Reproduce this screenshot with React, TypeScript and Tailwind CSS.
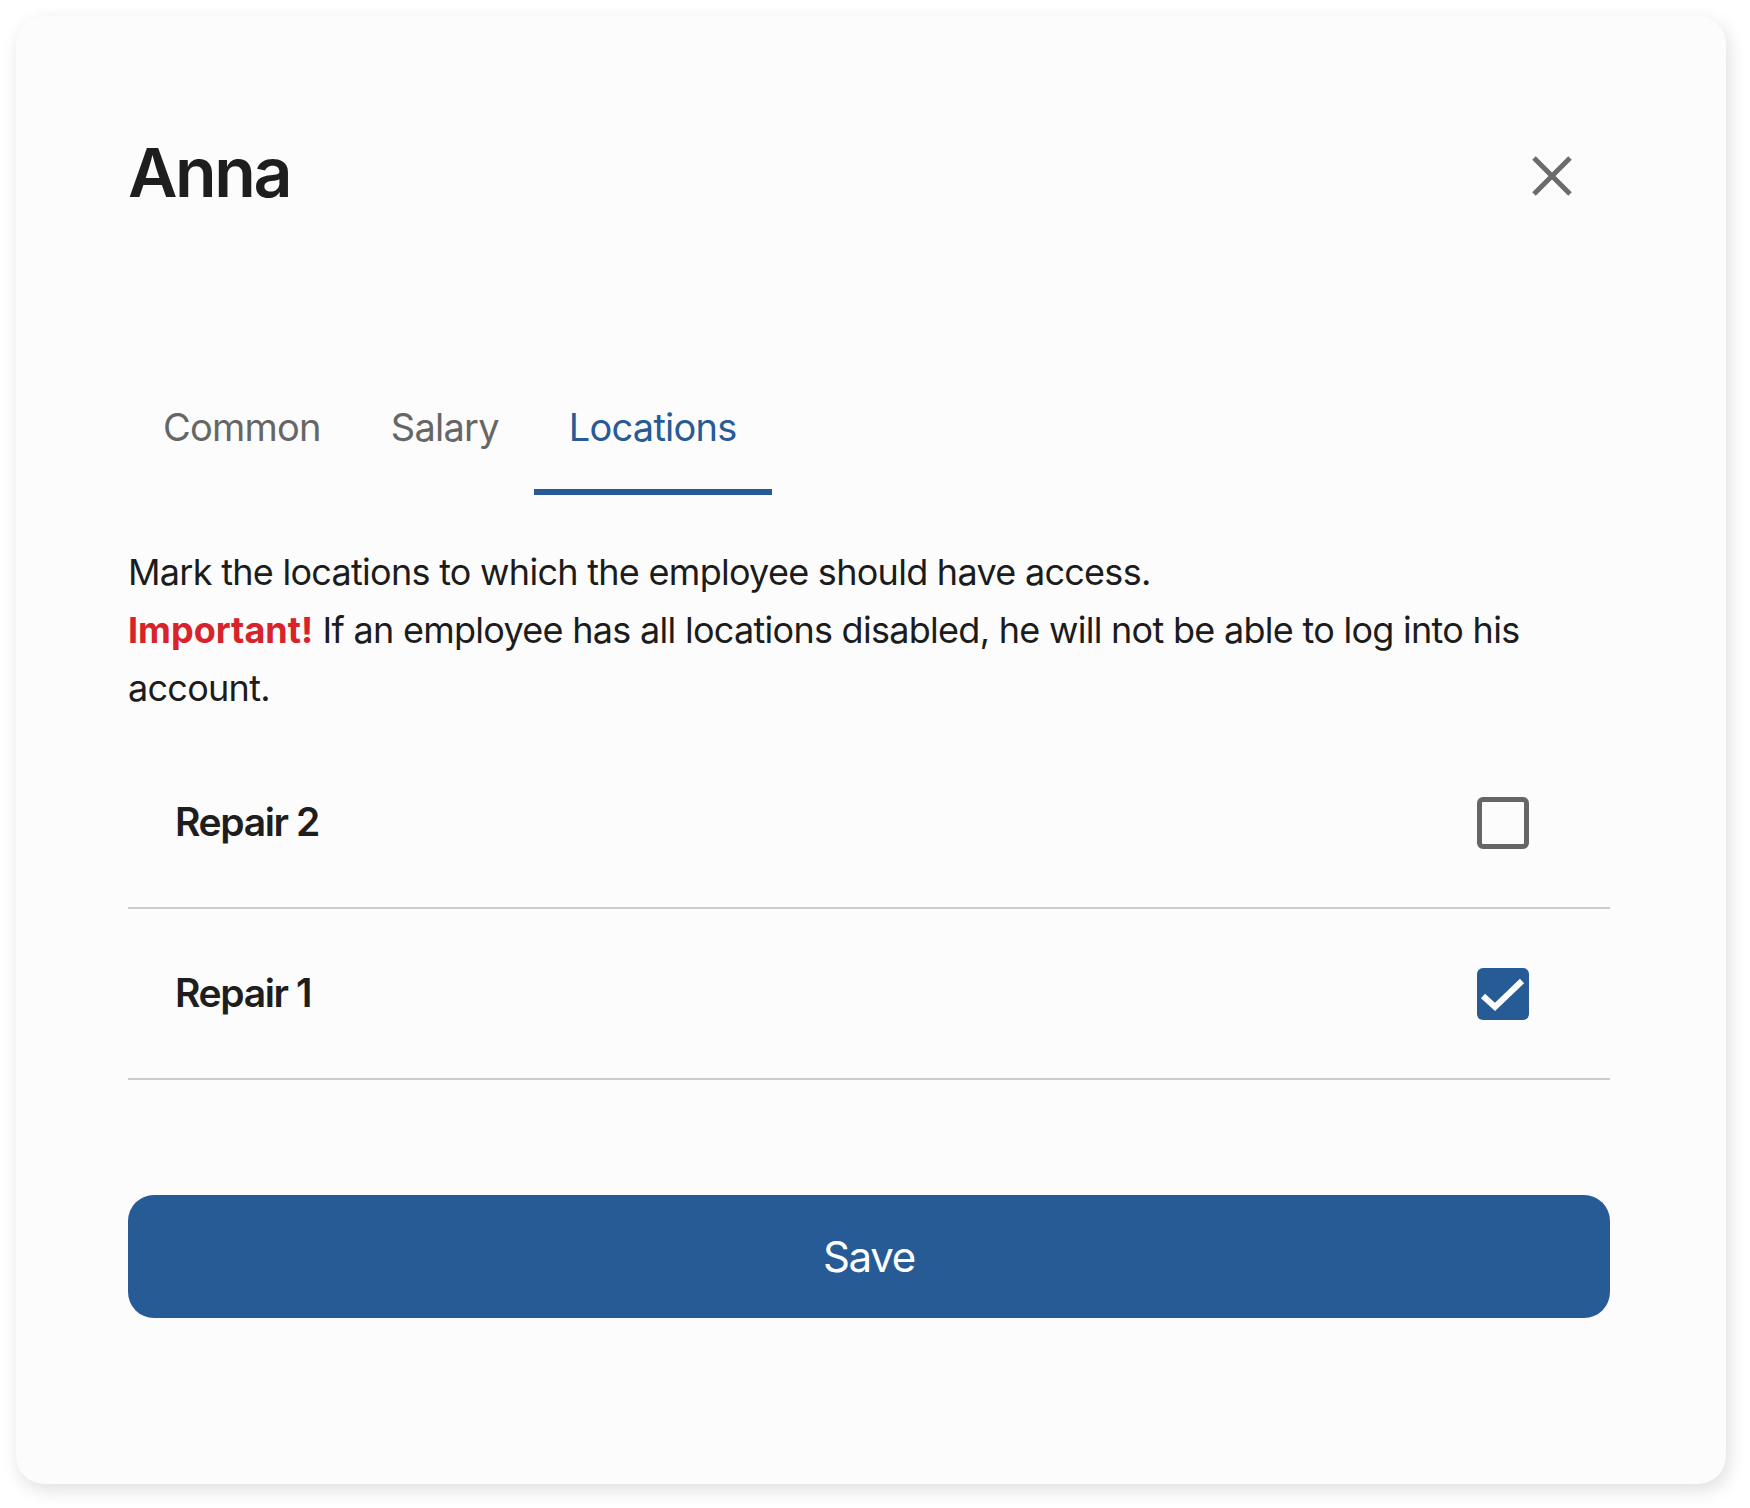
import { useState } from "react";

const TABS = ["Common", "Salary", "Locations"];

const LOCATIONS = [
  { id: 2, name: "Repair 2", checked: false },
  { id: 1, name: "Repair 1", checked: true },
];

function CloseIcon() {
  return (
    <svg width="40" height="40" viewBox="0 0 40 40" fill="none">
      <path d="M2 2L38 38M38 2L2 38" stroke="#6b6b6b" strokeWidth="5" />
    </svg>
  );
}

function Checkbox({ checked, onChange }: { checked: boolean; onChange: () => void }) {
  if (checked) {
    return (
      <button
        onClick={onChange}
        className="flex h-[52px] w-[52px] items-center justify-center rounded-[6px] bg-[#265b96]"
      >
        <svg width="52" height="52" viewBox="0 0 52 52" fill="none">
          <path d="M6 28L18 39L45 13" stroke="#ffffff" strokeWidth="6" />
        </svg>
      </button>
    );
  }
  return (
    <button
      onClick={onChange}
      className="h-[52px] w-[52px] rounded-[6px] border-[5px] border-[#666666] bg-transparent"
    />
  );
}

export default function App() {
  const [tab, setTab] = useState("Locations");
  const [items, setItems] = useState(LOCATIONS);

  const toggle = (id: number) =>
    setItems((prev) => prev.map((it) => (it.id === id ? { ...it, checked: !it.checked } : it)));

  return (
    <div className="min-h-screen bg-white pl-4 pt-4 font-['Inter',sans-serif]">
      <div className="flex w-[1710px] flex-col rounded-[28px] bg-[#fcfcfc] pb-[166px] pl-[112px] pr-[116px] pt-[115px] shadow-[3px_6px_18px_rgba(0,0,0,0.13)]">
        {/* header */}
        <div className="flex h-[82px] items-center justify-between">
          <h1 className="text-[68px] font-semibold leading-[82px] tracking-[-0.035em] text-[#1e1e1e]">Anna</h1>
          <button className="mr-[38px] mt-[8px]" aria-label="Close">
            <CloseIcon />
          </button>
        </div>

        {/* tabs */}
        <div className="mt-[191px] flex">
          {TABS.map((t) => {
            const active = t === tab;
            return (
              <button
                key={t}
                onClick={() => setTab(t)}
                className={
                  active
                    ? "border-b-[6px] border-[#265b96] px-[35px] pb-[39px] text-[38px] leading-[46px] tracking-[-0.02em] text-[#265b96]"
                    : "border-b-[6px] border-transparent px-[35px] pb-[39px] text-[38px] leading-[46px] tracking-[-0.02em] text-[#666666]"
                }
              >
                {t}
              </button>
            );
          })}
        </div>

        {/* description */}
        <p className="mt-[48px] text-[36px] leading-[58px] tracking-[-0.02em] text-[#1c1c1c]">
          Mark the locations to which the employee should have access.
          <br />
          <span className="font-bold tracking-normal text-[#d8232a]">Important!</span> If an employee has all locations
          disabled, he will not be able to log into his account.
        </p>

        {/* locations */}
        <div className="mt-[21px] flex flex-col">
          {items.map((it) => (
            <div
              key={it.id}
              className="flex h-[171px] items-center justify-between border-b-2 border-[#cccccc] pl-[47px] pr-[81px]"
            >
              <span className="text-[39px] font-semibold tracking-[-0.035em] text-[#1e1e1e]">{it.name}</span>
              <Checkbox checked={it.checked} onChange={() => toggle(it.id)} />
            </div>
          ))}
        </div>

        {/* save */}
        <button className="mt-[115px] h-[123px] w-full rounded-[26px] bg-[#275b96] text-[42px] tracking-[-0.03em] text-white">
          Save
        </button>
      </div>
    </div>
  );
}
